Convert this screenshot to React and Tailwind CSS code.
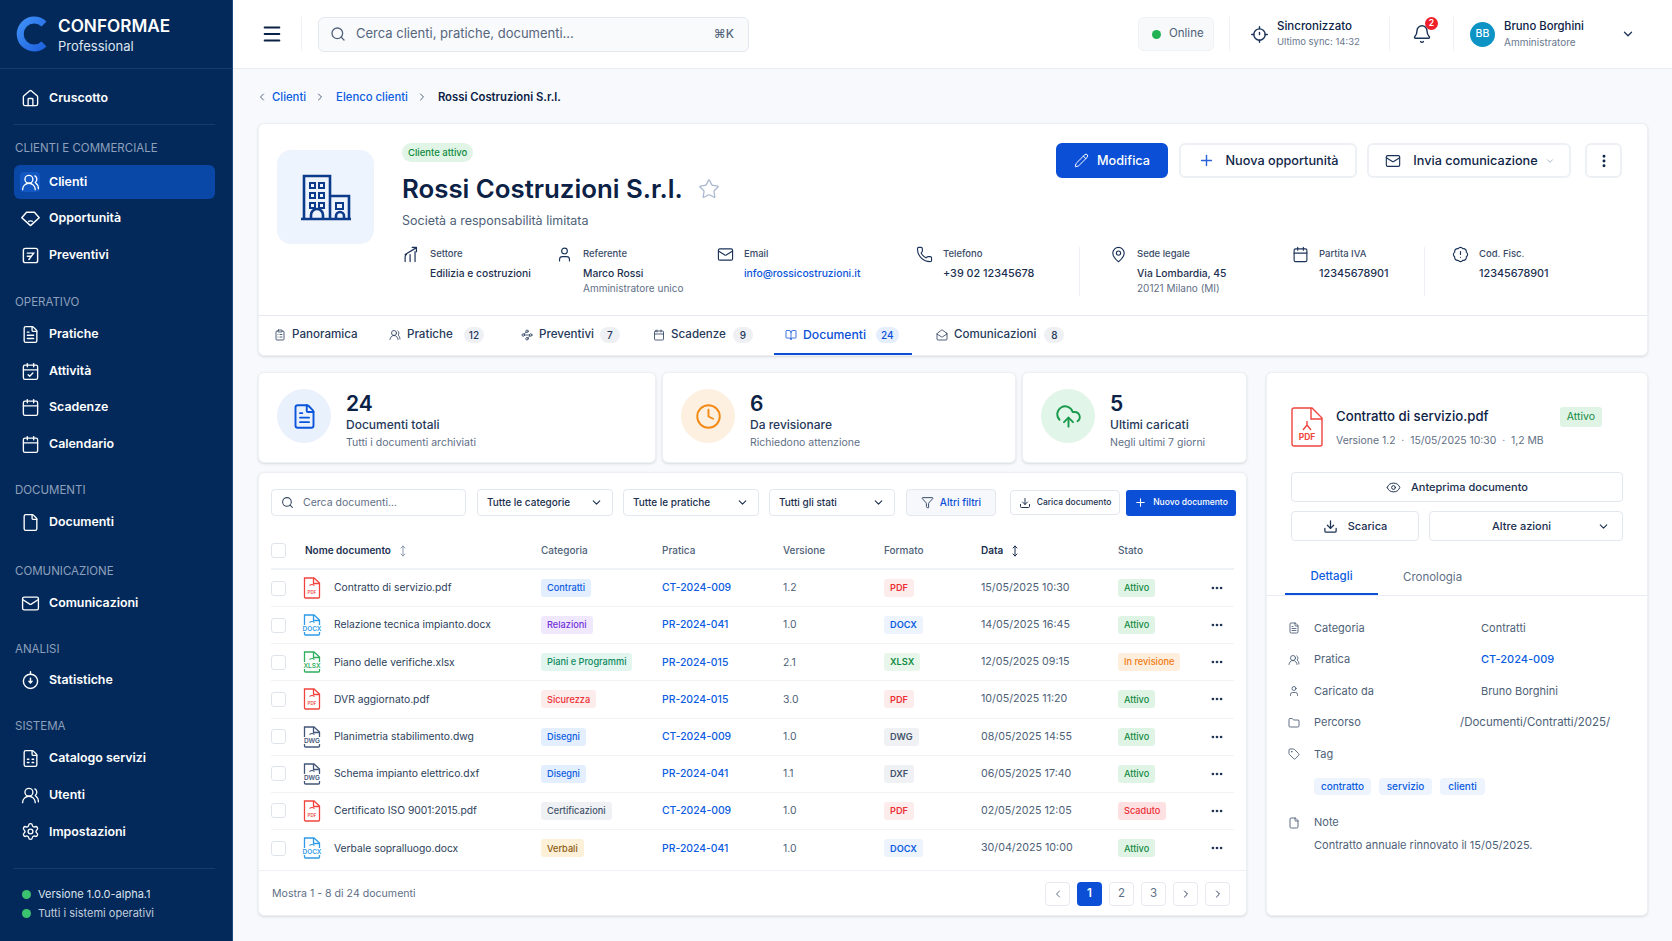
import {
  Bell, BookOpen, Calendar, CalendarCheck, ChevronDown, ChevronLeft, ChevronRight, MoveVertical, CloudUpload, Clock,
  Download, Ellipsis, EllipsisVertical, Eye, File, FileSpreadsheet, FileText, Folder, Funnel, House, Mail, MailOpen,
  MapPin, Menu, Pencil, Phone, Plus, Search, Settings, Star, Tag, User, UsersRound, BadgeAlert, ClipboardList, Waypoints,
} from 'lucide-react';

const Logo = () => (
  <svg width="34" height="38" viewBox="0 0 34 38" fill="none">
    <defs>
      <linearGradient id="lg" x1="0" y1="0" x2="1" y2="1">
        <stop offset="0" stopColor="#3f8ff5" />
        <stop offset="1" stopColor="#1f63e0" />
      </linearGradient>
    </defs>
    <path d="M30 9A14 14 0 1 0 30 29" stroke="url(#lg)" strokeWidth="7" />
  </svg>
);

const Diamond = ({ className }) => (
  <svg className={className} viewBox="0 0 24 24" fill="none" stroke="currentColor" strokeWidth="1.8" strokeLinejoin="round">
    <path d="M7 4h10l6 7-11 10L1 11z" />
    <path d="M9 16q3-2 6 0" />
  </svg>
);

const QuoteIcon = ({ className }) => (
  <svg className={className} viewBox="0 0 24 24" fill="none" stroke="currentColor" strokeWidth="1.8" strokeLinecap="round">
    <rect x="3" y="3" width="18" height="18" rx="2.5" />
    <path d="M8 9h8L10 17M8 13h5" />
  </svg>
);

const StatIcon = ({ className }) => (
  <svg className={className} viewBox="0 0 24 24" fill="none" stroke="currentColor" strokeWidth="1.8" strokeLinecap="round">
    <circle cx="12" cy="13" r="9" />
    <path d="M12 1v3M12 9v6M10 13l2 2 2-2" />
  </svg>
);

const SyncIcon = ({ className }) => (
  <svg className={className} viewBox="0 0 24 24" fill="none" stroke="currentColor" strokeWidth="2" strokeLinecap="round">
    <circle cx="12" cy="12" r="8" />
    <path d="M12 1v3M12 20v3M1 12h3M20 12h3M12 9v3" />
  </svg>
);

const SectorIcon = ({ className }) => (
  <svg className={className} viewBox="0 0 24 24" fill="none" stroke="currentColor" strokeWidth="1.7" strokeLinecap="round" strokeLinejoin="round">
    <path d="M3 22v-7q0-2 2-3M10 22V12M17 22V8M3 12L18 3M13 2h6v6" />
  </svg>
);

const Building = () => (
  <svg width="52" height="47" viewBox="0 0 52 47" fill="none" stroke="#0d3b8c" strokeWidth="2.6">
    <path d="M4 45V2h26v43M30 22h19v23M1 45h50" />
    <path d="M10 9h5v5h-5zM19 9h5v5h-5zM10 19h5v5h-5zM19 19h5v5h-5zM10 29h5v5h-5zM19 29h5v5h-5zM36 29h7v6h-7z" strokeWidth="2" />
    <path d="M11 45v-4a6 6 0 0 1 12 0v4M36 45v-3a4 4 0 0 1 8 0v3" />
  </svg>
);

const FileType = ({ label, color, wide }) => (
  <svg width="20" height="22" viewBox="0 0 20 22" fill="none" className="ml-[-2px] overflow-visible">
    <path d="M2.5 1h9.500L17.500 6v14a1 1 0 0 1-1 1h-13a1 1 0 0 1-1-1z" stroke={color} strokeWidth="1.300" fill="#fff" />
    <path d="M11.500 1v5.500h6" stroke={color} strokeWidth="1.300" />
    <path d="M7.500 8.500q2.500-2 5 0" stroke={color} strokeWidth="1.100" />
    {wide && <rect x="0" y="11" width="20" height="7" fill="#fff" />}
    <text x="10" y="17" textAnchor="middle" fontSize={wide ? 6.500 : 4.500} fontWeight="600" fill={color}>{label}</text>
  </svg>
);

const BigPdf = () => (
  <svg width="32" height="40" viewBox="0 0 32 40" fill="none" stroke="#f0443e" strokeWidth="1.400">
    <path d="M3 1h18l10 10v26a2 2 0 0 1-2 2H3a2 2 0 0 1-2-2V3a2 2 0 0 1 2-2z" />
    <path d="M20 1v11h11M16 14v4M16 18l-4 5M16 18l4 5" />
    <text x="16" y="33" textAnchor="middle" fontSize="8.500" fontWeight="700" fill="#f0443e" stroke="none">PDF</text>
  </svg>
);

function NavItem({ icon: Icon, label, active }) {
  return (
    <div className={`flex h-[34px] items-center rounded-md pl-[6px] text-[12.400px] font-semibold text-white ${active ? 'bg-[#0a48a8]' : ''}`}>
      <span className={`flex h-[20px] w-[20px] items-center justify-center rounded ${active ? 'bg-[#1257c2]' : ''}`}>
        <Icon className="h-[19px] w-[19px]" strokeWidth={1.700} />
      </span>
      <span className="ml-[9px]">{label}</span>
    </div>
  );
}

function NavSection({ label, className, gap = 'mt-[7px]', children }) {
  return (
    <div className={className}>
      <div className="h-4 pl-px text-[11.500px] leading-4 text-[#8ea0bb]">{label}</div>
      <div className={`${gap} flex flex-col gap-[2.700px]`}>{children}</div>
    </div>
  );
}

function Sidebar() {
  return (
    <aside className="flex h-[941px] w-[233px] shrink-0 flex-col border-r border-[#1f4a80] bg-[#03295a] text-white">
      <div className="flex h-[69px] shrink-0 items-center border-b border-[#173c6b] pl-[14px]">
        <Logo />
        <div className="ml-[10px] mt-px">
          <div className="text-[17.200px] font-semibold leading-[22px]">CONFORMAE</div>
          <div className="text-[13px] leading-[18px] text-[#dfe6f0]">Professional</div>
        </div>
      </div>
      <div className="flex flex-1 flex-col pl-[14px] pr-[17px] pt-[12px]">
        <NavItem icon={House} label="Cruscotto" />
        <div className="mt-[9px] border-t border-[#173c6b]" />
        <NavSection label="CLIENTI E COMMERCIALE" className="mt-[15px]" gap="mt-[9px]">
          <NavItem icon={UsersRound} label="Clienti" active />
          <NavItem icon={Diamond} label="Opportunità" />
          <NavItem icon={QuoteIcon} label="Preventivi" />
        </NavSection>
        <NavSection label="OPERATIVO" className="mt-[22px]">
          <NavItem icon={FileText} label="Pratiche" />
          <NavItem icon={CalendarCheck} label="Attività" />
          <NavItem icon={Calendar} label="Scadenze" />
          <NavItem icon={Calendar} label="Calendario" />
        </NavSection>
        <NavSection label="DOCUMENTI" className="mt-[21px]">
          <NavItem icon={File} label="Documenti" />
        </NavSection>
        <NavSection label="COMUNICAZIONE" className="mt-[24px]">
          <NavItem icon={Mail} label="Comunicazioni" />
        </NavSection>
        <NavSection label="ANALISI" className="mt-[21px]" gap="mt-[6px]">
          <NavItem icon={StatIcon} label="Statistiche" />
        </NavSection>
        <NavSection label="SISTEMA" className="mt-[21px]">
          <NavItem icon={FileSpreadsheet} label="Catalogo servizi" />
          <NavItem icon={UsersRound} label="Utenti" />
          <NavItem icon={Settings} label="Impostazioni" />
        </NavSection>
        <div className="mt-[19px] border-t border-[#173c6b] pl-[8px] pt-[16px] text-[11px]">
          <div className="flex h-[19px] items-center gap-[7px] text-[#dbe3ee]"><span className="h-[9px] w-[9px] rounded-full bg-[#3cc36f]" />Versione 1.0.0-alpha.1</div>
          <div className="flex h-[19px] items-center gap-[7px] text-[#c3cedd]"><span className="h-[9px] w-[9px] rounded-full bg-[#3cc36f]" />Tutti i sistemi operativi</div>
        </div>
      </div>
    </aside>
  );
}

function Topbar() {
  return (
    <header className="flex h-[69px] items-center border-b border-[#e9edf3] bg-white pl-[28px]">
      <Menu className="h-[22px] w-[22px] text-[#0b2145]" strokeWidth={2.200} />
      <div className="ml-[18px] h-[34px] border-l border-[#eef1f5]" />
      <div className="ml-[16px] flex h-[35px] w-[431px] items-center rounded-md border border-[#e3e8ef] bg-[#f9fafc] pl-[11px] pr-[14px]">
        <Search className="h-[16px] w-[16px] text-[#52637b]" />
        <span className="ml-[10px] flex-1 text-[13px] text-[#56667d]">Cerca clienti, pratiche, documenti...</span>
        <span className="text-[12px] font-medium text-[#56667d]">⌘K</span>
      </div>
      <div className="ml-[389px] flex h-[34px] w-[76px] items-center rounded-md border border-[#f0f2f6] bg-[#f8f9fb] pl-[13px] text-[11.500px] text-[#4e5f78]">
        <span className="h-[9px] w-[9px] rounded-full bg-[#22b254]" />
        <span className="ml-[8px]">Online</span>
      </div>
      <div className="ml-[15px] h-[34px] border-l border-[#eef1f5]" />
      <SyncIcon className="ml-[21px] h-[17px] w-[17px] text-[#1b3358]" />
      <div className="ml-[9px] mt-[-1px] w-[104px]">
        <div className="text-[11.500px] font-medium leading-[16px] text-[#0b2145]">Sincronizzato</div>
        <div className="text-[9.500px] leading-[16px] text-[#68778d]">Ultimo sync: 14:32</div>
      </div>
      <div className="ml-[8px] h-[34px] border-l border-[#eef1f5]" />
      <div className="relative ml-[22px]">
        <Bell className="h-[20px] w-[20px] text-[#1b3358]" strokeWidth={1.700} />
        <span className="absolute right-[-6px] top-[-7px] flex h-[13px] w-[13px] items-center justify-center rounded-full bg-[#f01f2a] text-[8.500px] font-semibold text-white">2</span>
      </div>
      <div className="ml-[21px] h-[34px] border-l border-[#eef1f5]" />
      <span className="ml-[16px] flex h-[25px] w-[25px] items-center justify-center rounded-full bg-[#0d93c4] text-[10.500px] font-medium text-white">BB</span>
      <div className="ml-[9px] mt-[-1px] w-[117px]">
        <div className="text-[11.300px] font-medium leading-[16px] text-[#0b2145]">Bruno Borghini</div>
        <div className="text-[10px] leading-[16px] text-[#68778d]">Amministratore</div>
      </div>
      <ChevronDown className="h-[14px] w-[14px] text-[#1b3358]" strokeWidth={2.200} />
    </header>
  );
}

function Info({ icon: Icon, label, value, sub, className, link, num }) {
  return (
    <div className={`flex ${className}`}>
      <span className="mr-[11px] mt-[-1px] flex w-[16px] justify-center"><Icon className="h-[17px] w-[17px] shrink-0 text-[#1b3358]" strokeWidth={1.600} /></span>
      <div>
        <div className="text-[9.500px] font-medium leading-[14px] text-[#3a4c68]">{label}</div>
        <div className={`mt-[5px] font-medium leading-[15px] ${num ? 'text-[10.800px]' : 'text-[10.300px]'} ${link ? 'text-[#0b55d9]' : 'text-[#1b3050]'}`}>{value}</div>
        {sub && <div className="text-[10px] leading-[15px] text-[#5f6f86]">{sub}</div>}
      </div>
    </div>
  );
}

function HeroCard() {
  const Btn = 'flex h-[35px] items-center justify-center rounded-md border-2 text-[12.700px] font-medium';
  const Outline = `${Btn} border-[#edf0f5] bg-white text-[#0f2547]`;
  return (
    <section className="rounded-t-md border border-b-0 border-[#edf0f4] bg-white shadow-sm">
      <div className="flex h-[192px] border-b border-[#e9edf3] pl-[18px] pr-[25px] pt-[19px]">
        <div className="mt-[7px] flex h-[94px] w-[97px] items-center justify-center rounded-[14px] bg-[#eef4fd]"><Building /></div>
        <div className="ml-[28px] flex-1">
          <div className="flex justify-between">
            <div>
              <div className="h-[19px] w-fit rounded-full bg-[#e1f5e7] px-[6px] text-[9.500px] font-medium leading-[19px] text-[#0f8a3c]">Cliente attivo</div>
              <div className="mt-[9px] flex items-center">
                <h1 className="text-[25.800px] font-semibold leading-[36px] text-[#0b2145]">Rossi Costruzioni S.r.l.</h1>
                <Star className="ml-[15px] h-[22px] w-[22px] text-[#aab8cf]" strokeWidth={1.400} />
              </div>
              <div className="mt-[5px] text-[12.500px] leading-[18px] text-[#4e5f78]">Società a responsabilità limitata</div>
            </div>
            <div className="flex">
              <div className={`${Btn} w-[112px] gap-[8px] border-[#0a4fd6] bg-[#0a4fd6] text-white`}><Pencil className="h-[15px] w-[15px]" strokeWidth={1.600} />Modifica</div>
              <div className={`${Outline} ml-[11px] w-[178px] gap-[11px]`}><Plus className="h-[17px] w-[17px] text-[#2a62d8]" />Nuova opportunità</div>
              <div className={`${Outline} ml-[10px] w-[204px] gap-[12px] pl-[2px]`}><Mail className="h-[16px] w-[16px] text-[#1b3358]" strokeWidth={1.700} />Invia comunicazione<ChevronDown className="ml-[-5px] h-[10px] w-[10px] text-[#9aa7ba]" /></div>
              <div className={`${Outline} ml-[14px] w-[37px]`}><EllipsisVertical className="h-[16px] w-[16px]" strokeWidth={2.400} /></div>
            </div>
          </div>
          <div className="ml-px mt-[17px] flex">
            <Info className="w-[153px]" icon={SectorIcon} label="Settore" value="Edilizia e costruzioni" />
            <Info className="w-[161px]" icon={User} label="Referente" value="Marco Rossi" sub="Amministratore unico" />
            <Info className="w-[199px]" icon={Mail} label="Email" value="info@rossicostruzioni.it" link />
            <Info className="w-[164px] border-r border-[#eef1f5]" icon={Phone} label="Telefono" value="+39 02 12345678" num />
            <Info className="w-[212px] pl-[30px]" icon={MapPin} label="Sede legale" value="Via Lombardia, 45" sub="20121 Milano (MI)" />
            <Info className="w-[133px] border-r border-[#eef1f5]" icon={Calendar} label="Partita IVA" value="12345678901" num />
            <Info className="pl-[27px]" icon={BadgeAlert} label="Cod. Fisc." value="12345678901" num />
          </div>
        </div>
      </div>
    </section>
  );
}

function TabItem({ icon: Icon, label, count, active, className, gap = 'ml-[6px]' }) {
  return (
    <div className={`flex h-[39px] items-center border-b-2 pt-px ${active ? 'border-[#0a4fd6] text-[#0a4fd6]' : 'border-transparent text-[#26395a]'} ${className}`}>
      <Icon className="h-[12px] w-[12px] shrink-0" strokeWidth={1.600} />
      <span className={`ml-[6px] font-medium ${active ? 'text-[12.200px]' : 'text-[11.600px]'}`}>{label}</span>
      {count && <span className={`${gap} flex h-[16px] min-w-[20px] items-center justify-center rounded-full px-[5px] text-[10px] font-medium ${active ? 'bg-[#e4eefd]' : 'bg-[#eef0f4]'}`}>{count}</span>}
    </div>
  );
}

function Tabs() {
  return (
    <div className="flex h-[40px] rounded-b-md border border-t-0 border-[#edf0f4] bg-white pl-[15px] shadow-sm">
      <TabItem icon={ClipboardList} label="Panoramica" className="w-[115px]" />
      <TabItem icon={UsersRound} label="Pratiche" count="12" gap="ml-[11px]" className="w-[132px]" />
      <TabItem icon={Waypoints} label="Preventivi" count="7" gap="ml-[6px]" className="w-[132px]" />
      <TabItem icon={Calendar} label="Scadenze" count="9" gap="ml-[7px]" className="w-[121px]" />
      <TabItem icon={BookOpen} label="Documenti" count="24" gap="ml-[10px]" active className="w-[138px] pl-[11px]" />
      <TabItem icon={MailOpen} label="Comunicazioni" count="8" gap="ml-[8px]" className="ml-[24px]" />
    </div>
  );
}

function StatCard({ icon: Icon, tone, num, title, sub, className }) {
  return (
    <div className={`flex h-[91px] items-start rounded-md border border-[#edf0f4] bg-white pl-[18px] pt-[16px] shadow-sm ${className}`}>
      <div className={`flex h-[54px] w-[54px] items-center justify-center rounded-full ${tone}`}><Icon className="h-[27px] w-[27px]" strokeWidth={1.700} /></div>
      <div className="ml-[15px] mt-[2px]">
        <div className="text-[21px] font-semibold leading-[25px] text-[#0b2145]">{num}</div>
        <div className="text-[12px] font-medium leading-[17px] text-[#26395a]">{title}</div>
        <div className="mt-[2px] text-[10.500px] leading-[16px] text-[#5f6f86]">{sub}</div>
      </div>
    </div>
  );
}

const GRID = 'grid grid-cols-[33px_30px_207px_121px_121px_101px_97px_137px_92px_1fr] items-center';

const TONES = {
  blue: 'bg-[#e3eefe] text-[#0b5ce0]',
  lightblue: 'bg-[#edf4fe] text-[#0b5ce0]',
  purple: 'bg-[#f0e9fd] text-[#7431d8]',
  teal: 'bg-[#e2f5ee] text-[#0e8a60]',
  red: 'bg-[#fdecec] text-[#ec2f35]',
  gray: 'bg-[#eff1f4] text-[#42526a]',
  amber: 'bg-[#fdf0d8] text-[#8a5a10]',
  green: 'bg-[#e0f4e6] text-[#148a42]',
  xgreen: 'bg-[#e8f6ec] text-[#0f8a3e]',
  orange: 'bg-[#fdeedd] text-[#f27a10]',
  scad: 'bg-[#fde0e2] text-[#ec2f35]',
};

const Badge = ({ tone, children, strong }) => (
  <span className={`inline-flex h-[18px] items-center justify-self-start rounded-[3px] px-[6px] text-[9.200px] ${strong ? 'font-semibold' : 'font-medium'} ${TONES[tone]}`}>{children}</span>
);

const FORMAT = { PDF: 'red', DOCX: 'lightblue', XLSX: 'xgreen', DWG: 'gray', DXF: 'gray' };
const ICONS = {
  pdf: { label: 'PDF', color: '#f0443e' },
  docx: { label: 'DOCX', color: '#2f9ae8', wide: true },
  xlsx: { label: 'XLSX', color: '#2fae5e', wide: true },
  dwg: { label: 'DWG', color: '#42567a', wide: true },
};

const ROWS = [
  ['pdf', 'Contratto di servizio.pdf', 'Contratti', 'blue', 'CT-2024-009', '1.2', 'PDF', '15/05/2025 10:30', 'Attivo', 'green'],
  ['docx', 'Relazione tecnica impianto.docx', 'Relazioni', 'purple', 'PR-2024-041', '1.0', 'DOCX', '14/05/2025 16:45', 'Attivo', 'green'],
  ['xlsx', 'Piano delle verifiche.xlsx', 'Piani e Programmi', 'teal', 'PR-2024-015', '2.1', 'XLSX', '12/05/2025 09:15', 'In revisione', 'orange'],
  ['pdf', 'DVR aggiornato.pdf', 'Sicurezza', 'red', 'PR-2024-015', '3.0', 'PDF', '10/05/2025 11:20', 'Attivo', 'green'],
  ['dwg', 'Planimetria stabilimento.dwg', 'Disegni', 'blue', 'CT-2024-009', '1.0', 'DWG', '08/05/2025 14:55', 'Attivo', 'green'],
  ['dwg', 'Schema impianto elettrico.dxf', 'Disegni', 'blue', 'PR-2024-041', '1.1', 'DXF', '06/05/2025 17:40', 'Attivo', 'green'],
  ['pdf', 'Certificato ISO 9001:2015.pdf', 'Certificazioni', 'gray', 'CT-2024-009', '1.0', 'PDF', '02/05/2025 12:05', 'Scaduto', 'scad'],
  ['docx', 'Verbale sopralluogo.docx', 'Verbali', 'amber', 'PR-2024-041', '1.0', 'DOCX', '30/04/2025 10:00', 'Attivo', 'green'],
];

const Check = () => <span className="h-[15px] w-[15px] rounded-[3px] border border-[#dfe4ec] bg-white" />;

const Select = ({ label, className }) => (
  <div className={`flex h-[27px] items-center justify-between rounded-[4px] border border-[#e3e8ef] bg-white pl-[9px] pr-[9px] text-[10px] font-medium text-[#1b3050] ${className}`}>
    {label}<ChevronDown className="h-[13px] w-[13px]" />
  </div>
);

const PageBtn = ({ children }) => (
  <span className="flex h-[24px] w-[25px] items-center justify-center rounded-[4px] border border-[#e6e9ef] bg-white text-[#5f6f86]">{children}</span>
);

function DocTable() {
  return (
    <section className="mt-[9px] h-[444px] rounded-md border border-[#edf0f4] bg-white shadow-sm">
      <div className="flex items-center pl-[12px] pt-[16px]">
        <div className="flex h-[27px] w-[195px] items-center rounded-[4px] border border-[#e3e8ef] pl-[9px] text-[10.500px] text-[#5f6f86]">
          <Search className="mr-[9px] h-[13px] w-[13px] text-[#3a4c68]" />Cerca documenti...
        </div>
        <Select label="Tutte le categorie" className="ml-[11px] w-[136px]" />
        <Select label="Tutte le pratiche" className="ml-[10px] w-[136px]" />
        <Select label="Tutti gli stati" className="ml-[10px] w-[126px]" />
        <div className="ml-[11px] flex h-[27px] w-[90px] items-center justify-center gap-[6px] rounded-[4px] border border-[#e3e8ef] bg-[#f7f8fb] text-[10px] font-medium text-[#0a4fd6]"><Funnel className="h-[13px] w-[13px] text-[#1b3358]" strokeWidth={1.600} />Altri filtri</div>
        <div className="ml-[14px] flex h-[25px] w-[110px] items-center justify-center gap-[6px] rounded-[4px] border border-[#e3e8ef] text-[8.500px] font-medium text-[#1b3050]"><Download className="h-[12px] w-[12px]" />Carica documento</div>
        <div className="ml-[6px] flex h-[26px] w-[110px] items-center justify-center gap-[6px] rounded-[3px] bg-[#0a4fd6] text-[8.500px] font-medium text-white"><Plus className="h-[13px] w-[13px]" />Nuovo documento</div>
      </div>
      <div className="mx-[12px] mt-[17px] text-[10px] font-medium text-[#4e5f78]">
        <div className={`${GRID} h-[37px] border-b-2 border-[#eff2f6]`}>
          <Check />
          <div className="col-span-2 ml-px flex items-center font-semibold text-[#1b3050]">Nome documento<MoveVertical className="ml-[6px] h-[12px] w-[12px] text-[#8c9ab0]" /></div>
          <span>Categoria</span>
          <span>Pratica</span>
          <span>Versione</span>
          <span>Formato</span>
          <span className="flex items-center font-semibold text-[#1b3050]">Data<MoveVertical className="ml-[6px] h-[12px] w-[12px]" /></span>
          <span>Stato</span>
        </div>
        {ROWS.map((r) => (
          <div key={r[1]} className={`${GRID} h-[37.140px] border-b border-[#f1f3f7] font-normal last:border-b-0`}>
            <Check />
            <FileType {...ICONS[r[0]]} />
            <span className="text-[10.300px] text-[#2c3e5a]">{r[1]}</span>
            <Badge tone={r[3]}>{r[2]}</Badge>
            <span className="text-[10.400px] font-medium text-[#0b5ce0]">{r[4]}</span>
            <span className="text-[10.400px] text-[#4e5f78]">{r[5]}</span>
            <Badge tone={FORMAT[r[6]]} strong>{r[6]}</Badge>
            <span className="text-[10.700px] text-[#4e5f78]">{r[7]}</span>
            <Badge tone={r[9]}>{r[8]}</Badge>
            <Ellipsis className="h-[14px] w-[14px] text-[#1b3050]" strokeWidth={2.600} />
          </div>
        ))}
      </div>
      <div className="mt-[3px] flex h-[46px] items-center justify-between border-t border-[#eef1f5] pl-[13px] pr-[16px] text-[10.600px] text-[#5f6f86]">
        <span>Mostra 1 - 8 di 24 documenti</span>
        <div className="flex gap-[7px] text-[11.500px]">
          <PageBtn><ChevronLeft className="h-[12px] w-[12px]" /></PageBtn>
          <span className="flex h-[24px] w-[25px] items-center justify-center rounded-[4px] bg-[#0a4fd6] font-semibold text-white">1</span>
          <PageBtn>2</PageBtn>
          <PageBtn>3</PageBtn>
          <PageBtn><ChevronRight className="h-[12px] w-[12px] text-[#26395a]" /></PageBtn>
          <PageBtn><ChevronRight className="h-[12px] w-[12px] text-[#26395a]" /></PageBtn>
        </div>
      </div>
    </section>
  );
}

function Detail({ icon: Icon, label, children }) {
  return (
    <div className="flex h-[31.500px] items-center text-[11px] text-[#4e5f78]">
      <Icon className="h-[12px] w-[12px] shrink-0 text-[#3a4c68]" strokeWidth={1.600} />
      <span className="ml-[14px] w-[167px]">{label}</span>
      {children}
    </div>
  );
}

function DetailPanel() {
  const Outline = 'flex h-[30px] items-center rounded-[4px] border border-[#e3e7ee] bg-white text-[11px] font-medium text-[#1b3050]';
  return (
    <aside className="ml-[19px] h-[544px] w-[382px] shrink-0 rounded-md border border-[#edf0f4] bg-white shadow-sm">
      <div className="flex px-[24px] pt-[34px]">
        <BigPdf />
        <div className="ml-[13px]">
          <div className="flex w-[266px] items-center justify-between">
            <span className="text-[13.200px] font-medium text-[#0b2145]">Contratto di servizio.pdf</span>
            <span className="rounded-[3px] bg-[#e0f4e6] px-[7px] py-[2px] text-[10.500px] text-[#148a42]">Attivo</span>
          </div>
          <div className="mt-[6px] text-[10.400px] text-[#5f6f86]">Versione 1.2 &nbsp;·&nbsp; 15/05/2025 10:30 &nbsp;·&nbsp; 1,2 MB</div>
        </div>
      </div>
      <div className="mx-[24px] mt-[24px]">
        <div className={`${Outline} justify-center gap-[10px] text-[10.700px]`}><Eye className="h-[15px] w-[15px]" strokeWidth={1.600} />Anteprima documento</div>
        <div className="mt-[9px] flex gap-[10px]">
          <div className={`${Outline} w-[128px] justify-center gap-[10px]`}><Download className="h-[15px] w-[15px]" />Scarica</div>
          <div className={`${Outline} flex-1 justify-between pl-[62px] pr-[12px]`}>Altre azioni<ChevronDown className="h-[13px] w-[13px]" /></div>
        </div>
      </div>
      <div className="mt-[18px] flex h-[37px] border-b border-[#e9edf3] pl-[18px] text-[11.500px]">
        <div className="flex w-[93px] items-center justify-center border-b-2 border-[#0a4fd6] font-medium text-[#0b5ce0]">Dettagli</div>
        <div className="ml-[25px] flex items-center text-[#5f6f86]">Cronologia</div>
      </div>
      <div className="px-[21px] pt-[16px]">
        <Detail icon={FileText} label="Categoria">Contratti</Detail>
        <Detail icon={UsersRound} label="Pratica"><span className="font-medium text-[#0b5ce0]">CT-2024-009</span></Detail>
        <Detail icon={User} label="Caricato da">Bruno Borghini</Detail>
        <Detail icon={Folder} label="Percorso"><span className="ml-[-21px] text-[11.500px]">/Documenti/Contratti/2025/</span></Detail>
        <Detail icon={Tag} label="Tag" />
        <div className="ml-[26px] mt-[8px] flex gap-[8px] text-[10px] font-medium text-[#0b5ce0]">
          <span className="flex h-[17px] w-[57px] items-center justify-center rounded bg-[#edf4fe]">contratto</span>
          <span className="flex h-[17px] w-[53px] items-center justify-center rounded bg-[#edf4fe]">servizio</span>
          <span className="flex h-[17px] w-[45px] items-center justify-center rounded bg-[#edf4fe]">clienti</span>
        </div>
        <div className="mt-[12px]"><Detail icon={File} label="Note" /></div>
        <div className="ml-[26px] text-[11px] leading-[15px] text-[#4e5f78]">Contratto annuale rinnovato il 15/05/2025.</div>
      </div>
    </aside>
  );
}

export default function App() {
  return (
    <div className="flex h-[941px] w-[1672px] overflow-hidden bg-[#f8f9fc] font-[Inter,sans-serif]">
      <Sidebar />
      <div className="flex-1">
        <Topbar />
        <main className="pl-[25px] pr-[24px] pt-[18px]">
          <nav className="flex h-[20px] items-center text-[11.300px] font-medium text-[#0b5ce0]">
            <ChevronLeft className="ml-[-2px] h-[12px] w-[12px] text-[#52637b]" />
            <span className="ml-[4px]">Clienti</span>
            <ChevronRight className="ml-[8px] h-[12px] w-[12px] text-[#52637b]" />
            <span className="ml-[10px]">Elenco clienti</span>
            <ChevronRight className="ml-[8px] h-[12px] w-[12px] text-[#52637b]" />
            <span className="ml-[10px] font-semibold text-[#0b2145]">Rossi Costruzioni S.r.l.</span>
          </nav>
          <div className="mt-[16px]">
            <HeroCard />
            <Tabs />
          </div>
          <div className="mt-[16px] flex">
            <div className="w-[989px]">
              <div className="flex gap-[6px]">
                <StatCard className="w-[398px]" tone="bg-[#e9f1fd] text-[#0a55d9]" icon={FileText} num="24" title="Documenti totali" sub="Tutti i documenti archiviati" />
                <StatCard className="w-[354px]" tone="bg-[#fdf0e0] text-[#f28a15]" icon={Clock} num="6" title="Da revisionare" sub="Richiedono attenzione" />
                <StatCard className="flex-1" tone="bg-[#e2f5e9] text-[#1a9a4c]" icon={CloudUpload} num="5" title="Ultimi caricati" sub="Negli ultimi 7 giorni" />
              </div>
              <DocTable />
            </div>
            <DetailPanel />
          </div>
        </main>
      </div>
    </div>
  );
}
